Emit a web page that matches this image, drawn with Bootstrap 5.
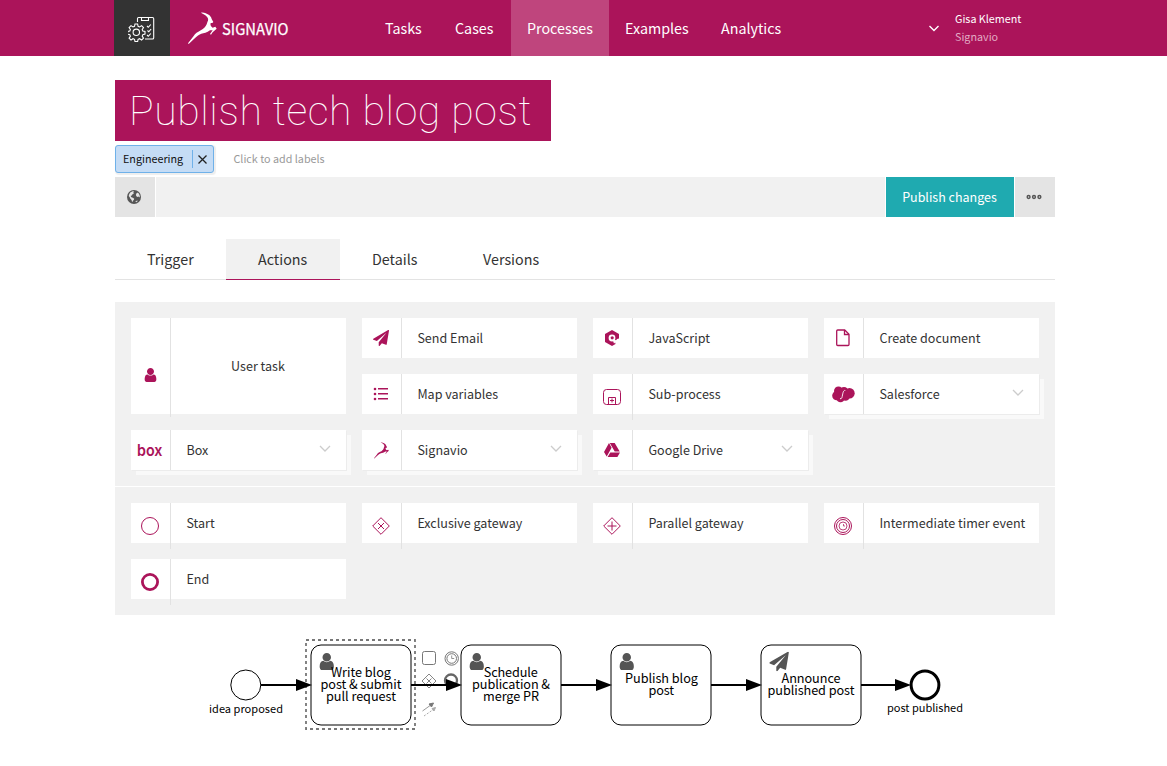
<!DOCTYPE html>
<html lang="en">
<head>
<meta charset="utf-8">
<meta name="viewport" content="width=device-width, initial-scale=1">
<title>Publish tech blog post</title>
<link rel="stylesheet" href="https://cdn.jsdelivr.net/npm/bootstrap@5.3.0/dist/css/bootstrap.min.css">
<style>
  :root { --brand: #ab145a; --panel: #f1f1f1; }
  body { font-family: "Source Sans Pro", "Noto Sans CJK SC", sans-serif; color: #333; font-size: 12.55px; overflow: hidden; }
  a { color: inherit; text-decoration: none; }
  svg { display: block; flex: none; }
  .topbar { background: var(--brand); height: 56px; padding-left: 114px; color: #fff; }
  .app-switch { width: 56px; height: 56px; background: #333; }
  .main-menu { display: grid; grid-template-columns: 70px 72px 98px 96px 93px; margin-left: 69px; font-size: 14.3px; line-height: 56px; }
  .main-menu a { padding-left: 16px; white-space: nowrap; }
  .main-menu .current { background: #bf457d; }
  .account { font-size: 10.75px; line-height: 18px; margin-left: 15px; }
  .account .org { color: #e2abc4; }
  .page { width: 940px; margin-left: 115px; padding-top: 24px; }
  .page-title { background: var(--brand); color: #fff; width: 436px; height: 61px; margin: 0; padding-left: 14px; font: 100 41px/63px "Roboto Slab", Roboto, sans-serif; letter-spacing: .6px; white-space: nowrap; }
  .labels { height: 28px; margin-top: 4px; font-size: 10.75px; line-height: 25px; }
  .chip { width: 99px; height: 28px; border: 1px solid #6fb1e9; border-radius: 3px; background: #c5dcf5; box-shadow: 1px 1px 1px 1px #eee; color: #111; padding-left: 7px; }
  .chip-name { height: 27px; }
  .chip-sep { width: 1px; height: 18px; background: #6fb1e9; margin-left: 9px; }
  .hint { color: #999; margin-left: 19.500px; line-height: 27px; }
  .toolbar { height: 40px; margin-top: 4px; gap: 1px; }
  .tool { width: 40px; background: #e4e4e4; padding-right: 2px; }
  .tool-space { background: var(--panel); }
  .publish { width: 128px; background: #1faab0; color: #fff; border: 0; border-radius: 0; font-size: 12.5px; line-height: 40px; padding: 0 1px 0 0; }
  .tabs { margin-top: 22px; height: 41px; border-bottom: 1px solid #e3e3e3; font-size: 14.3px; line-height: 40px; }
  .tabs a { height: 41px; padding-left: 32px; }
  .tabs .current { background: var(--panel); border-bottom: 1px solid var(--brand); }
  .tiles { display: grid; grid-template-columns: repeat(4, 215px); grid-auto-rows: 40px; gap: 16px; padding: 16px; background: var(--panel); }
  .tile { background: #fff; line-height: 40px; display: flex; white-space: nowrap; }
  .tile-icon { width: 40px; height: 40px; border-right: 1px solid #e2e2e2; padding-right: 1px; color: var(--brand); display: flex; align-items: center; justify-content: center; flex: none; }
  .tile-icon.tall { height: 46px; }
  .tile-name { padding-left: 15.400px; flex: 1; }
  .tile-big { grid-row: span 2; line-height: 96px; }
  .tile-big .tile-icon { height: 99px; padding-top: 15px; }
  .tile-big .tile-name { padding: 0 1px 0 0; text-align: center; }
  .stacked { box-shadow: 1px 1px 0 #ececec, 5px 5px 0 #f9f9f9; }
  .stacked .caret { margin: 15px 15px 0 0; }
  .diagram { font-size: 12.7px; }
</style>
</head>
<body>

<svg width="0" height="0" class="position-absolute">
  <symbol id="user" viewBox="0 128 1280 1536"><path fill="currentColor" d="M1280 1399q0 109-62.500 187t-150.500 78h-854q-88 0-150.500-78t-62.500-187q0-85 8.500-160.500t31.500-152 58.500-131 94-89 134.500-34.500q131 128 313 128t313-128q76 0 134.500 34.500t94 89 58.500 131 31.500 152 8.500 160.500zm-256-887q0 159-112.500 271.500t-271.500 112.500-271.500-112.500-112.500-271.500 112.500-271.500 271.500-112.500 271.500 112.500 112.500 271.500z"/></symbol>
  <symbol id="plane" viewBox="0 0 1792 1792"><path fill="currentColor" d="M1764 11q33 24 27 64l-256 1536q-5 29-32 45-14 8-31 8-11 0-24-5l-453-185-242 295q-18 23-49 23-13 0-22-4-19-7-30.500-23.500t-11.500-36.500v-349l864-1059-1069 925-395-162q-37-14-40-55-2-40 32-59l1664-960q15-9 32-9 20 0 36 11z"/></symbol>
  <symbol id="deer" viewBox="234 37 87 96"><path fill="currentColor" d="M274 37C290 39 303 46 305 57L310 66L307 69L302 69C300 75 303 80 308 83L316 80L320 86L308 97L303 104L300 102L308 91L300 91C291 99 281 99 274 101C264 104 261 110 256 113L236 132L234 130L251 108C255 99 264 96 270 92C281 88 287 80 290 73C292 68 292 65 294 62C297 52 285 44 274 39Z"/></symbol>
  <symbol id="caret" viewBox="0 0 12 7"><path d="M1 1l5 5 5-5" fill="none" stroke="currentColor" stroke-width="1.300"/></symbol>
</svg>

<header class="topbar d-flex align-items-center">
  <a href="#" class="app-switch d-flex align-items-center justify-content-center">
    <svg width="28" height="28" viewBox="128 14 28 28" fill="none" stroke="#fff" stroke-width="1.100">
      <path d="M137.500 22v-3.500q0-1 1-1h14q1.200 0 1.200 1.200v19q0 1.300-1.200 1.300h-7.500M141.500 17.500v3h7v-3"/>
      <path d="M147 26l1.300 1.300 2.500-2.800M147.500 30.500l1.300 1.300 2.300-2.800M147 35l1.300 1.300 2.500-2.800"/>
      <circle cx="136.300" cy="32.300" r="3.200"/>
      <path d="M135 24h2.600l.5 2.300 1.500.6 2-1.300 1.900 1.900-1.300 2 .6 1.500 2.200.5v2.600l-2.200.5-.6 1.500 1.300 2-1.900 1.900-2-1.300-1.500.6-.5 2.300H135l-.5-2.300-1.500-.6-2 1.300-1.900-1.900 1.300-2-.6-1.500-2.200-.5v-2.600l2.200-.5.600-1.500-1.300-2 1.900-1.900 2 1.300 1.500-.6z"/>
    </svg>
  </a>
  <a href="#"><svg width="130" height="56" viewBox="170 0 130 56">
    <use href="#deer" x="188" y="12.300" width="29" height="32"/>
    <text x="222" y="35" textLength="66.500" lengthAdjust="spacingAndGlyphs" font-family="Noto Sans CJK SC" font-weight="400" stroke="#fff" stroke-width=".25" font-size="15.500" fill="#fff">SIGNAVIO</text>
  </svg></a>
  <nav class="main-menu">
    <a href="#">Tasks</a><a href="#">Cases</a><a href="#" class="current">Processes</a><a href="#">Examples</a><a href="#">Analytics</a>
  </nav>
  <svg width="12" height="8" viewBox="0 0 12 8" style="margin-left:130px"><path d="M1.500 2L6 6.500 10.500 2" fill="none" stroke="#fff" stroke-width="1.400"/></svg>
  <div class="account"><div>Gisa Klement</div><div class="org">Signavio</div></div>
</header>

<main class="page">
  <h1 class="page-title">Publish tech blog post</h1>

  <div class="labels d-flex">
    <span class="chip d-flex align-items-center"><span class="chip-name">Engineering</span><i class="chip-sep"></i>
      <svg class="ms-1" width="11" height="11" viewBox="0 0 11 11"><path d="M1.500 1.500l8 8M9.500 1.500l-8 8" stroke="#222" stroke-width="1.300"/></svg>
    </span>
    <span class="hint">Click to add labels</span>
  </div>

  <div class="toolbar d-flex">
    <a href="#" class="tool d-flex align-items-center justify-content-center">
      <svg width="14" height="14" viewBox="0 0 14 14"><circle cx="7" cy="7" r="7" fill="#555"/><path fill="#e4e4e4" d="M3.200 2.600L5.500 1.300l1.700.3-1 1.100.9.500-1.600 1-.7 1.300-1 .3.200 1.300 1 .4.900.2 1.300 1-.4 1.200-.9.800-.3 1.200-.7-.3-.3-1.700-1.200-1.200-.7-1.500-1-1.300.6-1.800zM9.300 3.500l1.600-1 1.200 1.500.8 2.200-.5 1.300-.8-.9-1.200.3-1-.6-.5-1.200zM8.300 11.600l1.800-1 .7.300-1.600 1.400z"/></svg>
    </a>
    <div class="tool-space flex-grow-1"></div>
    <button class="publish btn">Publish changes</button>
    <a href="#" class="tool d-flex align-items-center justify-content-center">
      <svg width="16" height="6" viewBox="0 0 16 6" fill="none" stroke="#555" stroke-width="1.500"><circle cx="2.600" cy="3" r="1.400"/><circle cx="8" cy="3" r="1.400"/><circle cx="13.400" cy="3" r="1.400"/></svg>
    </a>
  </div>

  <nav class="tabs d-flex">
    <a href="#" style="width:111px">Trigger</a><a href="#" class="current" style="width:114px">Actions</a><a href="#" style="width:111px">Details</a><a href="#">Versions</a>
  </nav>

  <section class="tiles" style="margin-top:22px">
    <div class="tile tile-big"><span class="tile-icon"><svg width="13" height="14"><use href="#user"/></svg></span><span class="tile-name">User task</span></div>
    <div class="tile"><span class="tile-icon"><svg width="16" height="16"><use href="#plane"/></svg></span><span class="tile-name">Send Email</span></div>
    <div class="tile"><span class="tile-icon"><svg width="16" height="16" viewBox="0 0 16 16"><path fill="currentColor" d="M8 0l7 4v4.500l-2 .5-2 3 .5 2L8 16l-7-4V4z"/><circle cx="8" cy="8" r="3.400" fill="#fff"/><circle cx="8.200" cy="7.800" r="1.600" fill="currentColor"/><path d="M8.500 9.500l5 1-3.500 3z" fill="#fff"/></svg></span><span class="tile-name">JavaScript</span></div>
    <div class="tile"><span class="tile-icon"><svg width="14" height="18" viewBox="0 0 14 18" fill="none" stroke="currentColor" stroke-width="1.300"><path d="M1.700 1h7L13 5.200v10.300q0 1-1 1H1.700q-1 0-1-1V2q0-1 1-1z"/><path d="M8.500 1v4.500H13"/></svg></span><span class="tile-name">Create document</span></div>
    <div class="tile"><span class="tile-icon"><svg width="16" height="14" viewBox="0 0 16 14" fill="currentColor"><circle cx="2" cy="2" r="1.300"/><circle cx="2" cy="7" r="1.300"/><circle cx="2" cy="12" r="1.300"/><path d="M5 1h10v1.500H5zM5 6h10v1.500H5zM5 11h10v1.500H5z"/></svg></span><span class="tile-name">Map variables</span></div>
    <div class="tile"><span class="tile-icon tall"><svg width="18" height="16" viewBox="0 0 18 16" fill="none" stroke="currentColor"><rect x=".5" y=".5" width="17" height="15" rx="3"/><path d="M5.500 15V8.500h7V15M7 11.500h4M9 9.500v4"/></svg></span><span class="tile-name">Sub-process</span></div>
    <div class="tile stacked"><span class="tile-icon"><svg width="23" height="17" viewBox="0 0 23 17"><g fill="currentColor"><circle cx="6.500" cy="5" r="4.500"/><circle cx="12" cy="4.700" r="3.800"/><circle cx="17.500" cy="7.300" r="5.200"/><circle cx="4.700" cy="9.700" r="4.500"/><circle cx="8.500" cy="12" r="4.300"/><circle cx="13.500" cy="10.500" r="4.300"/></g><path d="M8 12.700c2 .3 2-1.200 2.500-3.700S11.500 4 13.300 4.500" fill="none" stroke="#fff" stroke-width=".9"/></svg></span><span class="tile-name">Salesforce</span><svg class="caret" width="12" height="7" color="#ccc"><use href="#caret"/></svg></div>
    <div class="tile stacked"><span class="tile-icon"><svg width="28" height="26" viewBox="0 0 28 26"><text x="1" y="19" textLength="25.500" lengthAdjust="spacingAndGlyphs" font-family="Inter" font-weight="600" font-size="16.500" fill="currentColor">box</text></svg></span><span class="tile-name">Box</span><svg class="caret" width="12" height="7" color="#ccc"><use href="#caret"/></svg></div>
    <div class="tile stacked"><span class="tile-icon"><svg width="15" height="17"><use href="#deer"/></svg></span><span class="tile-name">Signavio</span><svg class="caret" width="12" height="7" color="#ccc"><use href="#caret"/></svg></div>
    <div class="tile stacked"><span class="tile-icon"><svg width="16" height="14" viewBox="0 0 16 14" fill="currentColor"><path d="M5 0l2.600 4.700L2.700 13.500 0 9zM5.800 0h4.900l5 8.600h-5zM6.300 9.500h9.700L13.400 14H3.600z"/></svg></span><span class="tile-name">Google Drive</span><svg class="caret" width="12" height="7" color="#ccc"><use href="#caret"/></svg></div>
  </section>

  <section class="tiles" style="margin-top:1px">
    <div class="tile"><span class="tile-icon tall"><svg width="18" height="18" viewBox="0 0 18 18" fill="none" stroke="currentColor"><circle cx="9" cy="9" r="8.500"/></svg></span><span class="tile-name">Start</span></div>
    <div class="tile"><span class="tile-icon tall"><svg width="18" height="18" viewBox="0 0 18 18" fill="none" stroke="currentColor"><path d="M9 .7L17.300 9 9 17.300.7 9zM6 6l6 6M12 6l-6 6"/></svg></span><span class="tile-name">Exclusive gateway</span></div>
    <div class="tile"><span class="tile-icon tall"><svg width="18" height="18" viewBox="0 0 18 18" fill="none" stroke="currentColor"><path d="M9 .7L17.300 9 9 17.300.7 9zM9 4.500v9M4.500 9h9"/></svg></span><span class="tile-name">Parallel gateway</span></div>
    <div class="tile"><span class="tile-icon tall"><svg width="18" height="18" viewBox="0 0 18 18" fill="none" stroke="currentColor"><circle cx="9" cy="9" r="8.500"/><circle cx="9" cy="9" r="6.500"/><circle cx="9" cy="9" r="4" stroke-width=".8"/><path d="M9.500 7V9H11" stroke-width=".7"/></svg></span><span class="tile-name">Intermediate timer event</span></div>
    <div class="tile"><span class="tile-icon tall"><svg width="18" height="18" viewBox="0 0 18 18" fill="none" stroke="currentColor" stroke-width="2.800"><circle cx="9" cy="9" r="7.600"/></svg></span><span class="tile-name">End</span></div>
  </section>

  <svg class="diagram" width="940" height="151" viewBox="115 615 940 151">
    <!-- context pad of the selected task -->
    <g fill="none" stroke="#777">
      <rect x="422.500" y="651.500" width="13" height="13" rx="2"/>
      <circle cx="451.700" cy="658.500" r="6.700"/><circle cx="451.700" cy="658.500" r="4.800"/><path d="M451.700 655.500v3h2.500" stroke-width=".8"/>
      <path d="M429 674l7 7-7 7-7-7zM426.500 678.500l5 5M431.500 678.500l-5 5" stroke-width=".9"/>
      <circle cx="451" cy="680.500" r="6" stroke="#666" stroke-width="2.300"/>
      <path d="M422.500 711l9-6.500" stroke="#999"/><path d="M424 716l10-7" stroke="#aaa" stroke-dasharray="2 1.500"/><path d="M433.500 703l-4.500 1 2.500 3z" fill="#777"/><path d="M435.500 707.500l-3.500 1 2 2.500z" fill="#aaa" stroke="#aaa"/>
    </g>
    <!-- events and tasks -->
    <g fill="#fff" stroke="#000">
      <circle cx="245.800" cy="685" r="15"/>
      <rect x="311" y="645" width="100" height="80" rx="10"/>
      <rect x="461" y="645" width="100" height="80" rx="10"/>
      <rect x="611" y="645" width="100" height="80" rx="10"/>
      <rect x="761" y="645" width="100" height="80" rx="10"/>
      <circle cx="925" cy="685" r="13.900" stroke-width="3"/>
      <rect x="306" y="640" width="109" height="89" fill="none" stroke="#777" stroke-width="1.800" stroke-dasharray="3 3"/>
    </g>
    <!-- sequence flows -->
    <path stroke="#000" stroke-width="2" d="M261 685h40M411 685h40M561 685h40M711 685h40M861 685h40"/>
    <path d="M296 679l16 6-16 6zM446 679l16 6-16 6zM596 679l16 6-16 6zM746 679l16 6-16 6zM895 679l16 6-16 6z"/>
    <g color="#555">
      <use href="#user" x="319" y="653" width="15.500" height="17"/>
      <use href="#user" x="469" y="653" width="15.500" height="17"/>
      <use href="#user" x="619" y="653" width="15.500" height="17"/>
      <use href="#plane" x="769.300" y="651.700" width="19.600" height="19.600"/>
    </g>
    <g fill="#000">
      <text x="331" y="677" textLength="60">Write blog</text>
      <text x="320.500" y="689" textLength="81">post &amp; submit</text>
      <text x="326" y="701" textLength="70">pull request</text>
      <text x="483.800" y="677" textLength="54">Schedule</text>
      <text x="472" y="689" textLength="78">publication &amp;</text>
      <text x="483" y="701" textLength="56">merge PR</text>
      <text x="625" y="683" textLength="73">Publish blog</text>
      <text x="648.500" y="695" textLength="25.500">post</text>
      <text x="781.500" y="683" textLength="59">Announce</text>
      <text x="767.500" y="695" textLength="87">published post</text>
      <text x="209" y="713" textLength="74" font-size="11">idea proposed</text>
      <text x="887" y="712" textLength="76" font-size="11">post published</text>
    </g>
  </svg>
</main>

<script src="https://cdn.jsdelivr.net/npm/bootstrap@5.3.0/dist/js/bootstrap.bundle.min.js"></script>
</body>
</html>
